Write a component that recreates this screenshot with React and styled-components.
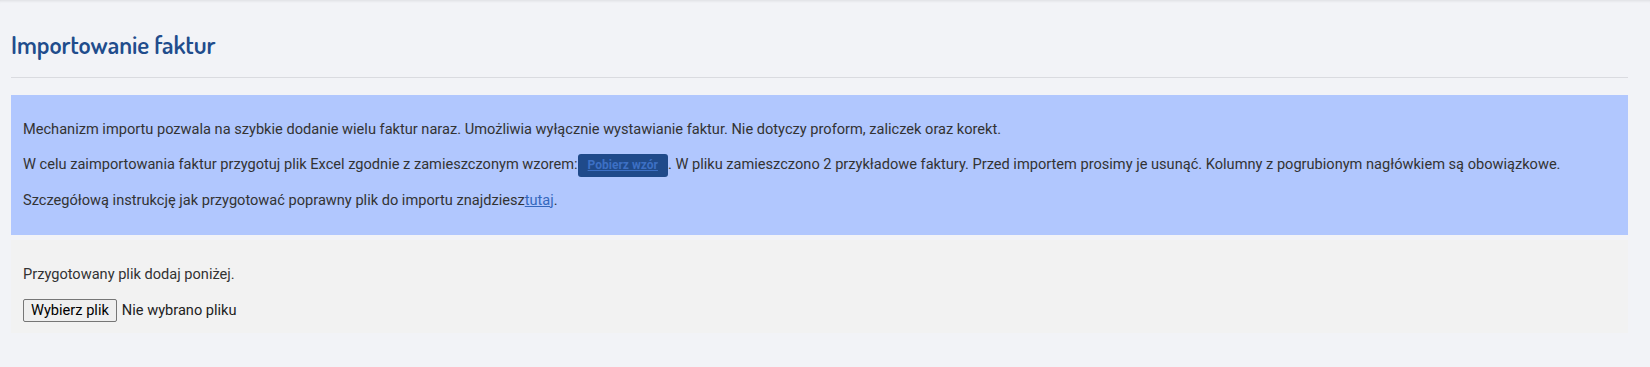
import React from 'react';
import styled, { createGlobalStyle } from 'styled-components';

const PageStyles = createGlobalStyle`
  html, body {
    margin: 0;
    background: #f2f3f7;
  }

  body {
    font-family: Roboto, "Liberation Sans", sans-serif;
    font-size: 14.6px;
    color: #333;
  }
`;

const Page = styled.div`
  min-height: 367px;
  padding: 0 22px 0 11px;
  box-shadow: inset 0 3px 3px -2px rgba(0, 0, 0, 0.09);
`;

const Title = styled.h1`
  margin: 0;
  padding-top: 29px;
  font-family: "Dosis", "Liberation Sans Narrow", "DejaVu Sans Condensed", sans-serif;
  font-size: 25px;
  font-weight: 600;
  line-height: 30px;
  color: #214c8c;
`;

const Divider = styled.hr`
  margin: 18px 0 17px;
  border: 0;
  border-top: 1px solid #dadbe0;
`;

const Panel = styled.section`
  padding: 10px 12px ${({ $bottom }) => $bottom || 10}px;
  background: ${({ $tone }) => ($tone === 'info' ? '#b1c7fe' : '#f2f2f2')};

  & + & {
    margin-top: 5px;
  }
`;

const Text = styled.p`
  margin: 14px 0;
  line-height: 21px;
`;

const TemplateButton = styled.a`
  display: inline-block;
  margin: -1px 0;
  padding: 1px 10px;
  border-radius: 3px;
  background: #1f4a8a;
  color: #3d70c4;
  font-size: 12px;
  font-weight: 700;
  line-height: 21px;
  vertical-align: middle;
  text-decoration: underline;
  cursor: pointer;
`;

const Link = styled.a`
  color: #3567bd;
  text-decoration: underline;
  cursor: pointer;
`;

const FileRow = styled.div`
  display: flex;
  align-items: center;
  gap: 5px;
  height: 23px;
`;

const FileButton = styled.button`
  height: 23px;
  padding: 0 7px;
  border: 1px solid #767676;
  border-radius: 2px;
  background: #efefef;
  color: #000;
  font-family: Roboto, "Liberation Sans", sans-serif;
  font-size: 14.6px;
`;

const FileName = styled.span`
  color: #222;
`;

export default function App() {
  return (
    <Page>
      <PageStyles />
      <Title>Importowanie faktur</Title>
      <Divider />

      <Panel $tone="info">
        <Text>
          Mechanizm importu pozwala na szybkie dodanie wielu faktur naraz. Umożliwia wyłącznie wystawianie faktur. Nie dotyczy proform, zaliczek oraz korekt.
        </Text>
        <Text>
          W celu zaimportowania faktur przygotuj plik Excel zgodnie z zamieszczonym wzorem:<TemplateButton>Pobierz wzór</TemplateButton>. W pliku zamieszczono 2 przykładowe faktury. Przed importem prosimy je usunąć. Kolumny z pogrubionym nagłówkiem są obowiązkowe.
        </Text>
        <Text>
          Szczegółową instrukcję jak przygotować poprawny plik do importu znajdziesz<Link>tutaj</Link>.
        </Text>
      </Panel>

      <Panel $bottom={11}>
        <Text>Przygotowany plik dodaj poniżej.</Text>
        <FileRow>
          <FileButton type="button">Wybierz plik</FileButton>
          <FileName>Nie wybrano pliku</FileName>
        </FileRow>
      </Panel>
    </Page>
  );
}
